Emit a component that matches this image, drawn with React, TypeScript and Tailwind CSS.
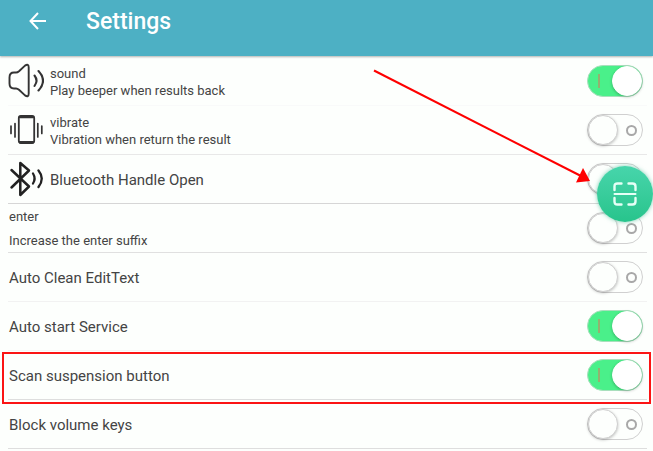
import { useState } from "react"
import type { ReactNode } from "react"

type Setting = {
  id: string
  title: string
  description?: string
  icon?: ReactNode
  checked: boolean
  divider: string
}

function SoundIcon() {
  return (
    <svg className="h-9 w-9" viewBox="0 0 36 36" fill="none" stroke="#333" strokeLinecap="round" strokeLinejoin="round">
      <path d="M1.5 14.5 Q1.5 9.5 6 9.5 H8 Q9.5 9.5 11 8.2 L17 2.6 Q20.7 0.2 20.7 4.5 V30.5 Q20.7 34.8 17 32.4 L11 26.8 Q9.5 25.5 8 25.5 H6 Q1.5 25.5 1.5 20.5 Z" strokeWidth="1.9" />
      <path d="M26.5 12.5 Q30.5 17.5 26.5 23" strokeWidth="2.1" />
      <path d="M30.5 8 Q39.5 17.5 30.5 27.5" strokeWidth="2.1" />
    </svg>
  )
}

function VibrateIcon() {
  return (
    <svg className="h-9 w-9" viewBox="0 0 36 36" fill="none" stroke="#333" strokeLinecap="round">
      <rect x="10.8" y="4" width="15.4" height="27" rx="2.2" strokeWidth="1.8" />
      <path d="M12 5 H25 M12 30.2 H25" strokeWidth="2.6" />
      <path d="M3 14 V21.5 M7 11.5 V25 M29.8 11.5 V25 M33.8 14 V21.5" strokeWidth="1.7" />
    </svg>
  )
}

function BluetoothIcon() {
  return (
    <svg className="h-9 w-9" viewBox="0 0 36 36" fill="none" stroke="#222" strokeLinecap="round" strokeLinejoin="round">
      <path d="M3.5 9 L21 25.5 L12.3 34 V2 L21 9.5 L3.5 26.5" strokeWidth="2.5" />
      <path d="M25 12.5 Q28.2 17.5 25 22.5" strokeWidth="2.3" />
      <path d="M30.5 9.5 Q37 17.5 30.5 26" strokeWidth="2.3" />
    </svg>
  )
}

const initialSettings: Setting[] = [
  { id: "sound", title: "sound", description: "Play beeper when results back", icon: <SoundIcon />, checked: true, divider: "border-[#f9fafa]" },
  { id: "vibrate", title: "vibrate", description: "Vibration when return the result", icon: <VibrateIcon />, checked: false, divider: "border-[#e8e8e8]" },
  { id: "bluetooth", title: "Bluetooth Handle Open", icon: <BluetoothIcon />, checked: false, divider: "border-[#d6d6d6]" },
  { id: "enter", title: "enter", description: "Increase the enter suffix", checked: false, divider: "border-[#e0e0e0]" },
  { id: "clean", title: "Auto Clean EditText", checked: false, divider: "border-[#f2f2f2]" },
  { id: "service", title: "Auto start Service", checked: true, divider: "border-[#f6f6f6]" },
  { id: "scan", title: "Scan suspension button", checked: true, divider: "border-[#dedede]" },
  { id: "volume", title: "Block volume keys", checked: false, divider: "border-[#dedede]" },
]

function Toggle({ id, checked, onChange }: { id: string; checked: boolean; onChange: () => void }) {
  return (
    <span className="relative mr-1 h-8 w-14 shrink-0">
      <input
        id={id}
        type="checkbox"
        checked={checked}
        onChange={onChange}
        className="peer block h-8 w-14 cursor-pointer appearance-none rounded-full border border-[#d0d0d0] bg-[#fdfffd] checked:border-[#a9dfbd] checked:bg-[#4af08a]"
      />
      <span className="pointer-events-none absolute top-[9px] left-[11px] hidden h-3.5 w-0.5 bg-[#96b070] peer-checked:block" />
      <span className="pointer-events-none absolute top-[11px] right-1.5 size-[11px] rounded-full border-2 border-[#a8a8a8] peer-checked:hidden" />
      <span className="pointer-events-none absolute top-px left-px size-[30px] rounded-full border border-[#d0d0d0] bg-[#fdfffd] shadow-[0_1px_3px_rgba(0,0,0,0.25)] peer-checked:left-[25px] peer-checked:border-white peer-checked:bg-white" />
    </span>
  )
}

function ScanButton() {
  return (
    <button
      aria-label="Scan"
      className="absolute top-[11px] right-0 z-10 flex size-14 items-center justify-center rounded-full bg-linear-to-b from-[#47d5ab] to-[#27c48c] shadow-[0_0_4px_rgba(40,170,130,0.6)]"
    >
      <svg className="size-6" viewBox="0 0 24 24" fill="none" stroke="#e6fff6" strokeWidth="2.4" strokeLinecap="round">
        <path d="M1.5 8 V4.5 Q1.5 1.5 4.5 1.5 H8.5 M15.5 1.5 H19.5 Q22.5 1.5 22.5 4.5 V8 M22.5 16 V19.5 Q22.5 22.5 19.5 22.5 H15.5 M8.5 22.5 H4.5 Q1.5 22.5 1.5 19.5 V16" />
        <path d="M1.5 12 H22.5" strokeWidth="2" />
      </svg>
    </button>
  )
}

function Arrow() {
  return (
    <svg className="pointer-events-none absolute -top-[86px] right-[62px] z-10 h-[116px] w-[218px]" viewBox="0 0 218 116">
      <path d="M1 1.5 L208 107" stroke="#fe0000" strokeWidth="2" />
      <path d="M217 112 L210 99 L203 113.5 Z" fill="#fe0000" />
    </svg>
  )
}

export default function App() {
  const [settings, setSettings] = useState(initialSettings)

  const toggle = (id: string) =>
    setSettings(settings.map((s) => (s.id === id ? { ...s, checked: !s.checked } : s)))

  return (
    <div className="min-h-screen bg-[#fdfffd] font-[Roboto,sans-serif] text-[#444]">
      <header className="flex h-14 items-center bg-[#4db0c4] pb-3 text-white shadow-[0_1px_2px_rgba(0,0,0,0.3)]">
        <button aria-label="Back" className="ml-7 flex size-5 items-center justify-center">
          <svg className="size-5" viewBox="0 0 20 20" fill="none" stroke="currentColor" strokeWidth="2">
            <path d="M18 9 H3 M10 1 L2.5 9 L10 17" />
          </svg>
        </button>
        <h1 className="ml-[38px] text-[23px] leading-7 font-medium">Settings</h1>
      </header>

      <ul className="pt-px">
        {settings.map((s) => (
          <li key={s.id} className="relative">
            <div className={`mr-1.5 ml-2 flex h-[49px] items-center border-b ${s.divider}`}>
              {s.icon && <span className="mr-1.5 shrink-0">{s.icon}</span>}
              <label htmlFor={s.id} className={s.icon ? "flex-1 pt-0.5" : "flex-1 pt-0.5 pl-px"}>
                {s.description ? (
                  <span className={`flex flex-col text-[13px] leading-4 ${s.icon ? "gap-px" : "gap-2"}`}>
                    <span>{s.title}</span>
                    <span>{s.description}</span>
                  </span>
                ) : (
                  <span className="text-[15px] leading-6">{s.title}</span>
                )}
              </label>
              <Toggle id={s.id} checked={s.checked} onChange={() => toggle(s.id)} />
            </div>
            {s.id === "bluetooth" && (
              <>
                <Arrow />
                <ScanButton />
              </>
            )}
            {s.id === "scan" && (
              <div className="pointer-events-none absolute inset-x-0.5 top-px -bottom-1 border-2 border-[#fb1414]" />
            )}
          </li>
        ))}
      </ul>
    </div>
  )
}
